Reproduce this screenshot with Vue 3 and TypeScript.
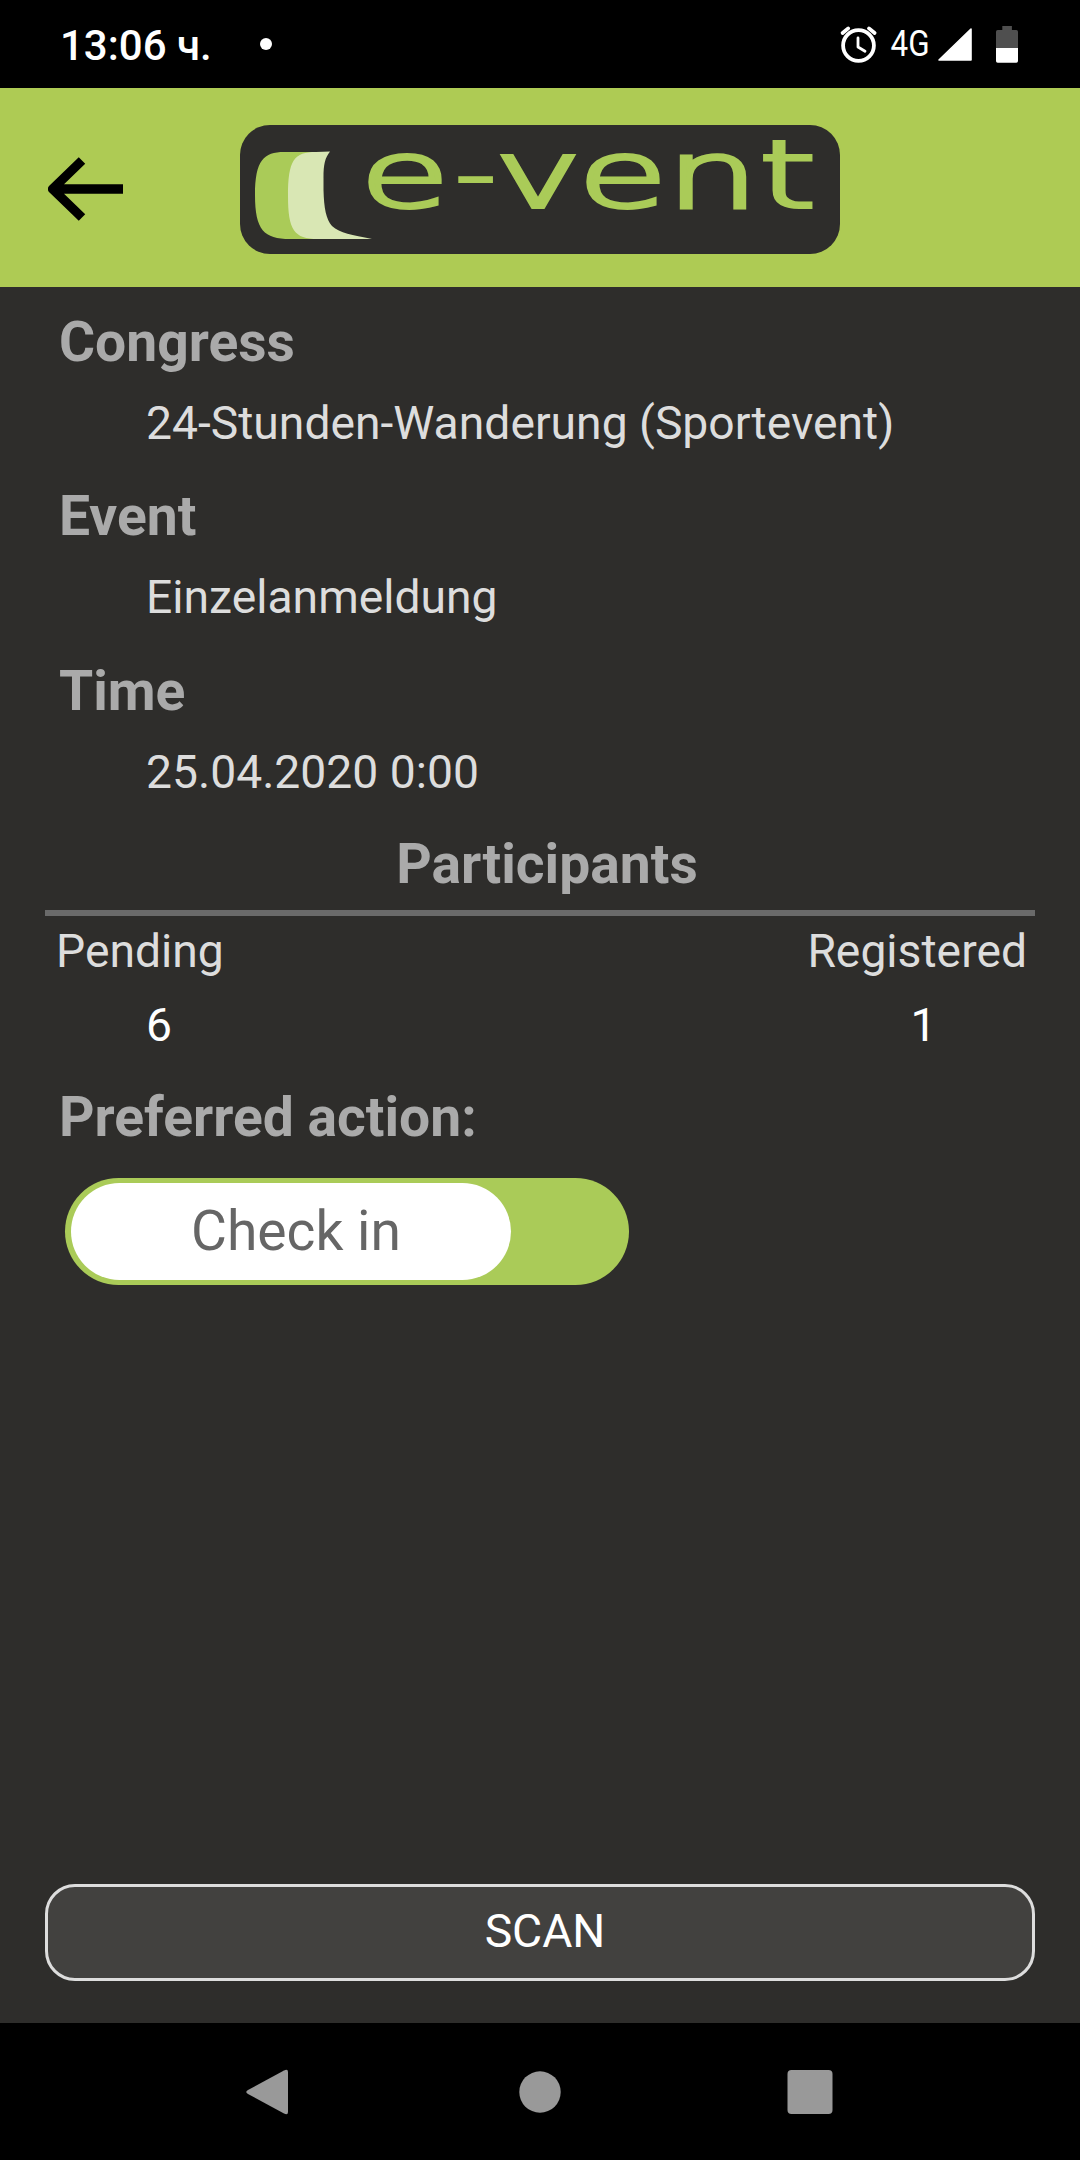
<script setup lang="ts">
interface Field {
  label: string
  value: string
}

const fields: Field[] = [
  { label: 'Congress', value: '24-Stunden-Wanderung (Sportevent)' },
  { label: 'Event', value: 'Einzelanmeldung' },
  { label: 'Time', value: '25.04.2020 0:00' },
]
const pending = 6
const registered = 1
</script>

<template>
  <div class="screen">
    <div class="status">
      <span class="clock">13:06 ч.</span>
      <span class="dot"></span>
      <svg class="status-icons" width="184" height="88" viewBox="836 0 184 88">
        <g fill="none" stroke="#fff" stroke-linecap="round">
          <circle cx="858.5" cy="45.5" r="15.4" stroke-width="3.8" />
          <path d="M858 38v9l7 4.2" stroke-width="2.8" stroke-linejoin="round" />
          <path d="M842.6 33l5.6-4.6M874.6 33l-5.6-4.6" stroke-width="3.8" />
        </g>
        <text x="890.5" y="55.6" textLength="39" lengthAdjust="spacingAndGlyphs" class="net">4G</text>
        <path d="M939 60l32-31v31z" fill="#fff" stroke="#fff" stroke-width="1.6" stroke-linejoin="round" />
        <path d="M1002.3 26h9.6v4h4.4q1.7 0 1.7 1.7V48h-22V31.7q0-1.7 1.7-1.7h4.6z" fill="#4f4f4f" />
        <path d="M996 48h22v13q0 1.7-1.7 1.7h-18.6q-1.7 0-1.7-1.7z" fill="#fff" />
      </svg>
    </div>

    <header class="bar">
      <svg class="back" width="75" height="66" viewBox="0 0 75 66">
        <path d="M4 33H75M34 4.5L4.5 33L34 61.5" fill="none" stroke="#000" stroke-width="9.3" stroke-linejoin="round" />
      </svg>
      <div class="logo">
        <svg width="600" height="129" viewBox="240 125 600 129">
          <path d="M280 151.900H318V239H290C264 239 255 230 255 195C255 160 264 151.900 284 151.900Z" fill="#aacb58" />
          <path d="M330 151.500C325 158 323.500 164 323.500 178V190C324 208 326 219 332 226C340 233 352 235 372 239H318C294 239 288 230 288 196C288 160 294 151.900 316 151.900Z" fill="#d9e7b4" />
          <text class="word" transform="translate(0 207) scale(1.58 1)"><tspan x="227.8" y="0">e</tspan><tspan class="hyphen" x="288.8" y="-9.5">-</tspan><tspan x="313.3 365.8 421.8 480.4" y="0">vent</tspan></text>
        </svg>
      </div>
    </header>

    <main class="body">
      <section v-for="f in fields" :key="f.label" class="field">
        <h2 class="label">{{ f.label }}</h2>
        <p class="value">{{ f.value }}</p>
      </section>

      <h2 class="label centered">Participants</h2>
      <div class="rule"></div>
      <div class="counts">
        <div class="col">
          <span class="text">Pending</span>
          <span class="num left">{{ pending }}</span>
        </div>
        <div class="col">
          <span class="text">Registered</span>
          <span class="num right">{{ registered }}</span>
        </div>
      </div>

      <h2 class="label">Preferred action:</h2>
      <div class="toggle"><div class="knob">Check in</div></div>

      <button class="scan">SCAN</button>
    </main>

    <nav class="nav">
      <svg width="1080" height="137" viewBox="0 2023 1080 137" fill="#999">
        <path d="M248 2090L284 2070.5Q288 2068.5 288 2072V2112Q288 2115.5 284 2113.5L248 2094Q244.5 2092 248 2090Z" />
        <circle cx="540" cy="2092" r="20.7" />
        <rect x="787.5" y="2070" width="45" height="44" rx="4" />
      </svg>
    </nav>
  </div>
</template>

<style>
body {
  background: #2e2d2b;
}
</style>

<style scoped>
.screen {
  width: 1080px;
  height: 2160px;
  display: flex;
  flex-direction: column;
  background: #2e2d2b;
  font-family: Roboto, sans-serif;
  overflow: hidden;
}
.status {
  height: 88px;
  flex: none;
  background: #000;
  display: flex;
  align-items: center;
  padding: 0 60px 0 60px;
}
.clock {
  color: #fff;
  font-size: 42px;
  font-weight: 500;
  line-height: 60px;
  margin-top: 4px;
  width: 200px;
}
.dot {
  width: 12px;
  height: 12px;
  border-radius: 50%;
  background: #fff;
}
.status-icons {
  margin-left: auto;
}
.net {
  font-size: 36px;
  fill: #fff;
}
.bar {
  height: 199px;
  flex: none;
  background: #aecb54;
  display: flex;
  align-items: center;
  padding: 0 48px;
}
.back {
  margin-top: 3px;
}
.logo {
  width: 600px;
  height: 129px;
  margin: 4px 0 0 117px;
  border-radius: 30px;
  background: #2e2d2b;
}
.logo svg {
  display: block;
  overflow: visible;
}
.word {
  font-family: "DejaVu Sans Light", "DejaVu Sans", sans-serif;
  font-weight: 200;
  font-size: 92px;
  fill: #aacb58;
  stroke: #aacb58;
  stroke-width: 4px;
}
.hyphen {
  font-size: 68px;
}
.body {
  height: 1736px;
  flex: none;
  box-sizing: border-box;
  display: flex;
  flex-direction: column;
  padding: 20px 45px 42px;
}
.field {
  flex: none;
  height: 174.3px;
}
.label {
  margin: 0;
  padding-left: 14px;
  font-size: 55.2px;
  font-weight: 700;
  line-height: 69px;
  color: #aaa;
}
.field .label {
  line-height: 71px;
}
.value {
  margin: 15px 0 0;
  padding-left: 101px;
  font-size: 46.25px;
  line-height: 60px;
  color: #ddd;
}
.centered {
  text-align: center;
  padding-left: 14px;
  margin-bottom: 11px;
}
.rule {
  height: 6px;
  flex: none;
  background: #6a6a6a;
}
.counts {
  display: flex;
  justify-content: space-between;
  padding: 5px 8px 0 11px;
  height: 167px;
  box-sizing: border-box;
}
.col {
  display: flex;
  flex-direction: column;
  gap: 14px;
  font-size: 46.25px;
  line-height: 60px;
}
.text {
  color: #ddd;
}
.num {
  color: #fff;
}
.left {
  padding-left: 90px;
}
.right {
  padding-left: 103px;
}
.toggle {
  width: 564px;
  height: 107px;
  margin: 26.5px 0 0 20px;
  box-sizing: border-box;
  padding: 5px 6px;
  border-radius: 54px;
  background: #aacb58;
}
.knob {
  width: 440px;
  height: 97px;
  box-sizing: border-box;
  border-radius: 49px;
  background: #fff;
  color: #666;
  font-size: 55.2px;
  line-height: 96px;
  padding-left: 10px;
  text-align: center;
}
.scan {
  margin-top: auto;
  height: 97px;
  box-sizing: border-box;
  border: 3px solid #ddd;
  border-radius: 30px;
  background: #42413f;
  color: #fff;
  font: 400 46.25px/89px Roboto, sans-serif;
  padding: 0 0 2px 10px;
}
.nav {
  height: 137px;
  background: #000;
}
.nav svg {
  display: block;
}
</style>
